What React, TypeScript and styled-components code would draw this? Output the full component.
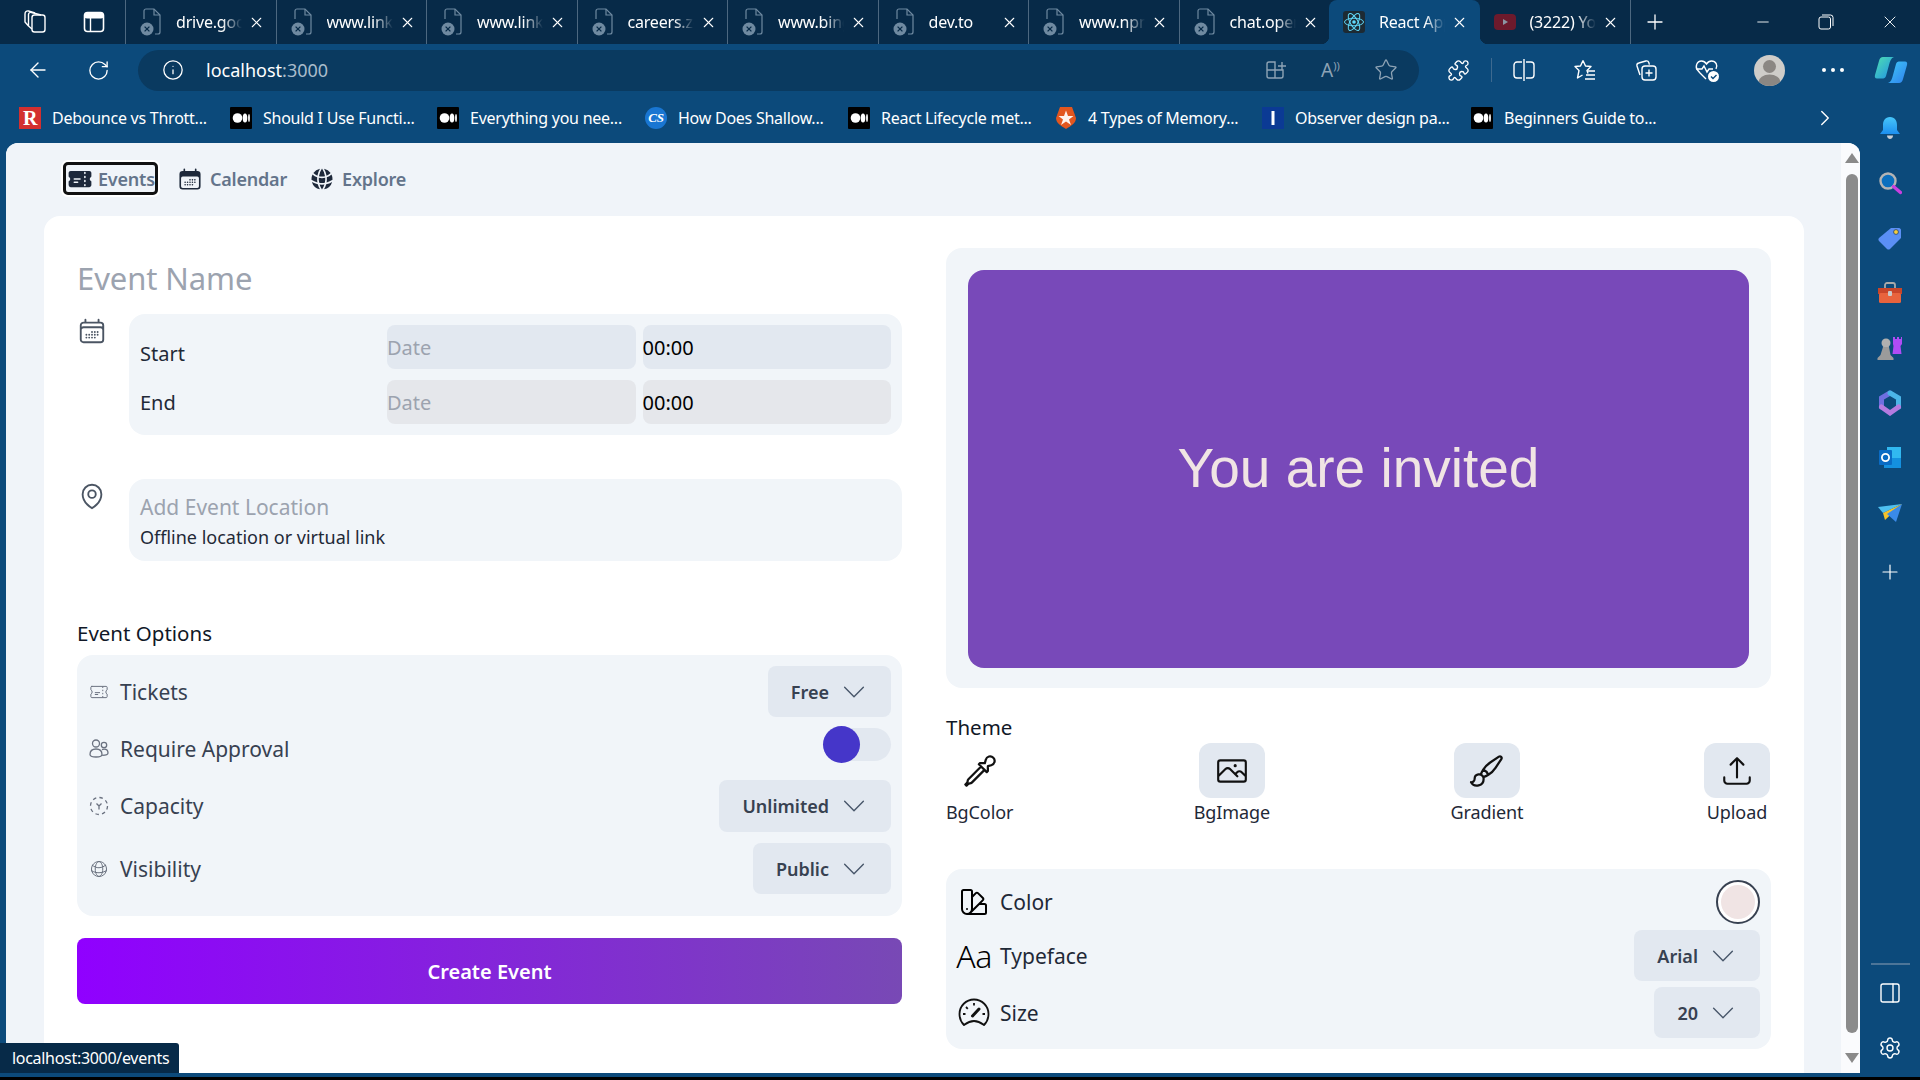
import React from "react";
import styled, { createGlobalStyle } from "styled-components";
import {
  HiTicket,
  HiCalendarDays,
  HiGlobeAlt,
  HiOutlineCalendarDays,
  HiOutlineMapPin,
  HiOutlineTicket,
  HiOutlineGlobeAlt,
  HiOutlineChevronDown,
  HiOutlineEyeDropper,
  HiOutlinePhoto,
  HiOutlinePaintBrush,
  HiOutlineArrowUpTray,
  HiOutlineSwatch,
} from "react-icons/hi2";
import {
  ArrowLeft,
  RotateCw,
  Info,
  Puzzle,
  Star,
  X,
  Plus,
  Minus,
  ChevronRight,
  Settings,
  PanelRight,
} from "lucide-react";

const FONT = `"Noto Sans", "Open Sans", sans-serif`;
const DARK = "#072a48";
const BLUE = "#0c4a7b";

const GlobalStyle = createGlobalStyle`
  html, body {
    margin: 0;
    height: 100%;
    overflow: hidden;
    font-family: ${FONT};
  }
  * {
    box-sizing: border-box;
  }
`;

const Window = styled.div`
  position: relative;
  display: flex;
  flex-direction: column;
  height: 1080px;
  background: ${BLUE};
  border-bottom: 3px solid #000;
  overflow: hidden;
`;

/* ---------- tab strip ---------- */
const TabStrip = styled.div`
  display: flex;
  flex: none;
  height: 44px;
  background: ${DARK};
  color: #fff;
`;

const StripButton = styled.div<{ $w: number }>`
  display: flex;
  flex: none;
  align-items: center;
  justify-content: center;
  width: ${(p) => p.$w}px;
`;

const Tab = styled.div<{ $active?: boolean; $plain?: boolean }>`
  position: relative;
  display: flex;
  flex: none;
  align-items: center;
  width: 150.5px;
  height: 44px;
  padding-left: 14px;
  border-left: ${(p) => (p.$active || p.$plain ? "none" : "1px solid #4d6880")};
  background-clip: padding-box;
  ${(p) =>
    p.$active &&
    `
    background: ${BLUE};
    border-radius: 8px 8px 0 0;
    &::before, &::after {
      content: "";
      position: absolute;
      bottom: 0;
      width: 8px;
      height: 8px;
    }
    &::before {
      left: -8px;
      background: radial-gradient(circle at 0 0, transparent 8px, ${BLUE} 8.5px);
    }
    &::after {
      right: -8px;
      background: radial-gradient(circle at 100% 0, transparent 8px, ${BLUE} 8.5px);
    }
  `}
`;

const TabTitle = styled.span`
  width: 66px;
  margin-left: 14px;
  font-size: 16px;
  letter-spacing: -0.2px;
  white-space: nowrap;
  overflow: hidden;
  -webkit-mask-image: linear-gradient(to right, #000 70%, transparent 100%);
  mask-image: linear-gradient(to right, #000 70%, transparent 100%);
`;

const TabClose = styled.span`
  display: flex;
  margin-left: 6px;
`;

const NewTab = styled.div`
  display: flex;
  flex: none;
  align-items: center;
  height: 44px;
  padding-left: 12px;
  border-left: 1px solid #4d6880;
`;

const WindowControls = styled.div`
  display: flex;
  flex: 1;
  justify-content: flex-end;
  align-items: center;
`;

/* ---------- toolbar ---------- */
const Toolbar = styled.div`
  display: flex;
  flex: none;
  align-items: center;
  height: 52px;
  padding-left: 8px;
  color: #fff;
`;

const ToolSlot = styled.div<{ $w?: number }>`
  display: flex;
  flex: none;
  align-items: center;
  justify-content: center;
  width: ${(p) => p.$w ?? 61}px;
`;

const AddressBar = styled.div`
  display: flex;
  flex: none;
  align-items: center;
  width: 1281px;
  height: 41px;
  margin: 0 9px 0 10px;
  padding-left: 24px;
  background: #0a3a60;
  border-radius: 21px;
`;

const Url = styled.div`
  flex: 1;
  margin-left: 22px;
  font-size: 18px;
  span {
    color: #a9bccb;
  }
`;

const AddressAction = styled.div`
  display: flex;
  flex: none;
  align-items: center;
  justify-content: center;
  width: 55px;
  color: #8ea3b5;
  font-size: 19px;
`;

const ReadAloudWaves = styled.span`
  margin-top: -10px;
  font-size: 11px;
`;

const ToolDivider = styled.div`
  flex: none;
  width: 1px;
  height: 24px;
  margin: 0 1px 0 2px;
  background: #3e6a90;
`;

const Avatar = styled.div`
  width: 31px;
  height: 31px;
  border-radius: 50%;
  overflow: hidden;
  background: #cfcdc9;
`;

const DotGroup = styled.div`
  display: flex;
  gap: 5px;
`;

const Dot = styled.span`
  width: 4px;
  height: 4px;
  background: #fff;
  border-radius: 50%;
`;

/* ---------- lower area ---------- */
const Lower = styled.div`
  display: flex;
  flex: 1;
  min-height: 0;
`;

const MainColumn = styled.div`
  display: flex;
  flex: 1;
  flex-direction: column;
  min-width: 0;
  padding-bottom: 4px;
`;

const Bookmarks = styled.div`
  display: flex;
  flex: none;
  align-items: center;
  height: 47px;
  padding: 0 0 4px 19px;
  color: #fff;
`;

const Bookmark = styled.div<{ $w: number }>`
  display: flex;
  flex: none;
  align-items: center;
  width: ${(p) => p.$w}px;
  gap: 11px;
  font-size: 16px;
  letter-spacing: -0.25px;
  white-space: nowrap;
`;

const BookmarkMore = styled.div`
  display: flex;
  margin-left: 132px;
`;

const Content = styled.div`
  display: flex;
  flex: 1;
  min-height: 0;
  margin-left: 6px;
  border-radius: 12px 12px 0 12px;
  overflow: hidden;
  background: #fff;
`;

const Page = styled.div`
  flex: 1;
  min-width: 0;
  overflow: hidden;
  background: #f0f4f9;
`;

const ScrollBar = styled.div`
  display: flex;
  flex: none;
  flex-direction: column;
  width: 19px;
  padding: 10px 2px 0 4px;
  background: #fafbfd;
  align-items: center;
`;

const ScrollArrow = styled.div<{ $down?: boolean }>`
  flex: none;
  width: 0;
  height: 0;
  border-left: 7px solid transparent;
  border-right: 7px solid transparent;
  ${(p) =>
    p.$down
      ? "border-top: 10px solid #8a8a8a;"
      : "border-bottom: 10px solid #8a8a8a;"}
`;

const ScrollThumb = styled.div`
  flex: none;
  width: 12px;
  height: 859px;
  margin: 11px 0 20px;
  border-radius: 6px;
  background: #8b8b8b;
`;

const Sidebar = styled.div`
  display: flex;
  flex: none;
  flex-direction: column;
  align-items: center;
  width: 60px;
  padding: 4px 0 2px;
  color: #fff;
`;

const SideSlot = styled.div<{ $mt?: number }>`
  display: flex;
  flex: none;
  align-items: center;
  justify-content: center;
  height: 55px;
  margin-top: ${(p) => p.$mt ?? 0}px;
`;

const SideSpacer = styled.div`
  flex: 1;
`;

const SideDivider = styled.div`
  flex: none;
  width: 39px;
  height: 2px;
  background: #4d7598;
`;

const StatusTip = styled.div`
  position: absolute;
  left: 0;
  bottom: 4px;
  width: 179px;
  height: 30px;
  padding-left: 12px;
  background: ${DARK};
  border-radius: 0 3px 0 0;
  color: #fff;
  font-size: 16px;
  letter-spacing: -0.3px;
  line-height: 30px;
`;

/* ---------- app nav ---------- */
const Nav = styled.nav`
  display: flex;
  align-items: center;
  padding: 19px 0 0 57px;
  height: 52px;
`;

const NavItem = styled.div<{ $active?: boolean }>`
  display: flex;
  align-items: center;
  height: 33px;
  padding: 0 0 0 3px;
  margin-right: ${(p) => (p.$active ? "16px" : "19px")};
  gap: ${(p) => (p.$active ? "5px" : "7px")};
  color: #64748b;
  font-size: 18px;
  font-weight: 600;
  letter-spacing: -0.2px;
  border-radius: 5px;
  ${(p) =>
    p.$active &&
    "border: 3px solid #111; box-shadow: 0 0 0 2px #fff; padding-left: 1px;"}
  svg {
    color: #1e293b;
    flex: none;
  }
`;

const Card = styled.div`
  display: flex;
  gap: 44px;
  height: 900px;
  margin: 21px 37px 0 38px;
  padding: 32px 33px 0;
  background: #fff;
  border-radius: 16px;
`;

const Column = styled.div`
  display: flex;
  flex: 1;
  flex-direction: column;
  min-width: 0;
`;

/* ---------- left form ---------- */
const EventName = styled.div`
  height: 40px;
  margin: 10px 0 16px;
  color: #9ca3af;
  font-size: 31px;
  line-height: 40px;
  letter-spacing: -0.1px;
`;

const FieldRow = styled.div<{ $mt?: number }>`
  display: flex;
  margin-top: ${(p) => p.$mt ?? 0}px;
`;

const FieldIcon = styled.div`
  flex: none;
  width: 52px;
  height: 30px;
  padding-top: 2px;
  color: #4b5563;
  display: flex;
  justify-content: flex-start;
`;

const FieldPanel = styled.div`
  display: flex;
  flex: 1;
  flex-direction: column;
  background: #f1f5f9;
  border-radius: 16px;
`;

const DatePanel = styled(FieldPanel)`
  gap: 11px;
  padding: 11px 11px 11px 11px;
`;

const DateRow = styled.div`
  display: flex;
  align-items: center;
  gap: 7px;
  height: 44px;
`;

const DateLabel = styled.div<{ $drop?: number }>`
  flex: 1;
  padding-top: ${(p) => p.$drop ?? 0}px;
  color: #1f2937;
  font-size: 20px;
`;

const DateField = styled.div<{ $bg: string; $muted?: boolean }>`
  flex: none;
  width: 248.5px;
  height: 44px;
  padding-top: 1px;
  background: ${(p) => p.$bg};
  border-radius: 8px;
  color: ${(p) => (p.$muted ? "#9ca3af" : "#000")};
  font-size: 20px;
  line-height: 44px;
`;

const LocationPanel = styled(FieldPanel)`
  height: 82px;
  padding: 13px 11px 0;
`;

const LocationTitle = styled.div`
  color: #9ca3af;
  font-size: 21px;
  line-height: 30px;
`;

const LocationHint = styled.div`
  margin-top: 1px;
  color: #1f2937;
  font-size: 18px;
  line-height: 28px;
`;

const SectionTitle = styled.div<{ $mt: number }>`
  margin-top: ${(p) => p.$mt}px;
  color: #111827;
  font-size: 20.5px;
  line-height: 28px;
`;

const OptionsPanel = styled.div`
  display: flex;
  flex-direction: column;
  gap: 11px;
  margin-top: 8px;
  padding: 11px 11px 22px 12px;
  background: #f1f5f9;
  border-radius: 16px;
`;

const OptionRow = styled.div<{ $h: number }>`
  display: flex;
  align-items: center;
  justify-content: space-between;
  height: ${(p) => p.$h}px;
`;

const OptionLabel = styled.div`
  display: flex;
  align-items: center;
  gap: 11px;
  color: #374151;
  font-size: 21px;
`;

const OptionIcon = styled.span`
  display: flex;
  flex: none;
  align-items: center;
  justify-content: center;
  width: 20px;
  height: 24px;
  color: #6b7280;
`;

const Dropdown = styled.div<{ $h: number }>`
  display: flex;
  align-items: center;
  gap: 10px;
  height: ${(p) => p.$h}px;
  padding: 0 22px 0 23px;
  background: #e2e8f0;
  border-radius: 8px;
  color: #374151;
  font-size: 18px;
  font-weight: 600;
  svg {
    color: #475569;
    flex: none;
  }
`;

const Toggle = styled.div`
  position: relative;
  align-self: flex-start;
  width: 68px;
  height: 33px;
  background: #e2e8f0;
  border-radius: 17px;
`;

const Knob = styled.div`
  position: absolute;
  left: 0;
  top: -2px;
  width: 37px;
  height: 37px;
  background: #4536c9;
  border-radius: 50%;
`;

const CreateButton = styled.div`
  display: flex;
  align-items: center;
  justify-content: center;
  height: 66px;
  margin-top: 22px;
  background: linear-gradient(to right, #9000ff, #7849b5);
  border-radius: 8px;
  color: #fff;
  font-size: 20px;
  font-weight: 600;
`;

/* ---------- right preview ---------- */
const PreviewPanel = styled.div`
  height: 440px;
  padding: 22px;
  background: #f1f5f9;
  border-radius: 16px;
`;

const Preview = styled.div`
  display: flex;
  align-items: center;
  justify-content: center;
  height: 398px;
  padding-bottom: 3px;
  background: #7849b9;
  border-radius: 16px;
  color: #f0e4e4;
  font-family: "Liberation Sans", Arial, sans-serif;
  font-size: 55px;
`;

const ThemeOptions = styled.div`
  display: flex;
  justify-content: space-between;
  margin-top: 2px;
  padding-right: 1px;
`;

const ThemeOption = styled.div`
  display: flex;
  flex-direction: column;
  align-items: center;
  color: #1f2937;
  font-size: 18px;
  letter-spacing: -0.1px;
  line-height: 24px;
`;

const ThemeTile = styled.div<{ $plain?: boolean }>`
  display: flex;
  align-items: center;
  justify-content: center;
  width: 66px;
  height: 55px;
  margin-bottom: 2px;
  border-radius: 12px;
  background: ${(p) => (p.$plain ? "transparent" : "#e2e8f0")};
  color: #111;
`;

const StylePanel = styled.div`
  display: flex;
  flex-direction: column;
  margin-top: 45px;
  height: 180px;
  padding: 11px 11px 11px 12px;
  background: #f1f5f9;
  border-radius: 16px;
`;

const StyleRow = styled.div<{ $h: number; $mt?: number }>`
  display: flex;
  align-items: center;
  justify-content: space-between;
  height: ${(p) => p.$h}px;
  margin-top: ${(p) => p.$mt ?? 0}px;
`;

const StyleLabel = styled.div`
  display: flex;
  align-items: center;
  gap: 10px;
  color: #1f2937;
  font-size: 21px;
`;

const StyleIcon = styled.div`
  display: flex;
  flex: none;
  align-items: center;
  justify-content: center;
  width: 32px;
  height: 34px;
  color: #000;
`;

const AaGlyph = styled.span`
  font-size: 32px;
  font-weight: 300;
  letter-spacing: -0.5px;
  line-height: 1;
`;

const Swatch = styled.div`
  width: 44px;
  height: 44px;
  background: #f0e4e4;
  border: 2px solid #374151;
  border-radius: 50%;
  box-shadow: inset 0 0 0 3px #fff;
`;

/* ---------- drawn icons ---------- */
const Workspaces = () => (
  <svg width="24" height="26" viewBox="0 0 24 26" fill="none" stroke="#fff" strokeWidth="1.4">
    <rect x="9" y="6" width="13" height="17" rx="2.5" />
    <path d="M9 20 5.5 17V5.5C5.5 4 7 3 8.5 3.5L18 6M5.5 17 2 13V5C2 3 3.5 1.5 5.5 2L12 4" />
  </svg>
);

const VerticalTabs = () => (
  <svg width="22" height="22" viewBox="0 0 22 22" fill="none">
    <rect x="1.5" y="1.5" width="19" height="19" rx="3" stroke="#fff" strokeWidth="1.6" />
    <rect x="1.5" y="1.5" width="19" height="6" rx="2.5" fill="#fff" />
    <path d="M7.5 7v13" stroke="#fff" strokeWidth="1.4" />
  </svg>
);

const SleepingDoc = () => (
  <svg width="22" height="30" viewBox="0 0 22 30" fill="none" style={{ flex: "none" }}>
    <path d="M4 12V4a2 2 0 0 1 2-2h8l6 6v17a2 2 0 0 1-2 2h-3" stroke="#6f8aa1" strokeWidth="1.2" />
    <path d="M14 2v6h6" stroke="#6f8aa1" strokeWidth="1.2" />
    <circle cx="7" cy="22" r="6.5" fill="#6f8aa1" />
    <path d="m4.6 19.6 4.8 4.8m0-4.8-4.8 4.8" stroke={DARK} strokeWidth="1.3" />
  </svg>
);

const ReactFav = () => (
  <svg width="22" height="22" viewBox="0 0 22 22" fill="none" style={{ flex: "none" }}>
    <rect width="22" height="22" rx="3" fill="#1d2a33" />
    <g stroke="#61dafb" strokeWidth="1">
      <ellipse cx="11" cy="11" rx="9.5" ry="3.8" />
      <ellipse cx="11" cy="11" rx="9.5" ry="3.8" transform="rotate(60 11 11)" />
      <ellipse cx="11" cy="11" rx="9.5" ry="3.8" transform="rotate(120 11 11)" />
    </g>
    <circle cx="11" cy="11" r="1.8" fill="#61dafb" />
  </svg>
);

const YouTubeFav = () => (
  <svg width="22" height="16" viewBox="0 0 22 16" style={{ flex: "none" }}>
    <rect width="22" height="16" rx="4" fill="#6d1a2c" />
    <path d="M9 5v6l5-3z" fill="#8c96a3" />
  </svg>
);

const RestoreIcon = () => (
  <svg width="16" height="16" viewBox="0 0 16 16" fill="none" stroke="#fff" strokeWidth="1">
    <rect x="1" y="3" width="11.5" height="12" rx="2" />
    <path d="M4 1h8.5A2.5 2.5 0 0 1 15 3.5V12" />
  </svg>
);

const AddTabIcon = () => (
  <svg width="24" height="24" viewBox="0 0 24 24" fill="none" stroke="#8ea3b5" strokeWidth="1.4">
    <path d="M3 12h8v8H5a2 2 0 0 1-2-2zM11 12h8v6a2 2 0 0 1-2 2h-6zM3 12V6a2 2 0 0 1 2-2h6v8" />
    <path d="M14 8h8M18 4v8" />
  </svg>
);

const SplitIcon = () => (
  <svg width="22" height="24" viewBox="0 0 22 24" fill="none" stroke="#fff" strokeWidth="1.4">
    <path d="M9 4H4a3 3 0 0 0-3 3v10a3 3 0 0 0 3 3h5M13 4h5a3 3 0 0 1 3 3v10a3 3 0 0 1-3 3h-5M11 1v22" />
  </svg>
);

const CollectionsIcon = () => (
  <svg width="24" height="24" viewBox="0 0 24 24" fill="none" stroke="#fff" strokeWidth="1.4">
    <path d="M6 17 3 8a2.5 2.5 0 0 1 1.8-3l7-2a2.5 2.5 0 0 1 3 1.6l.6 2" />
    <rect x="8" y="8" width="14" height="14" rx="3" />
    <path d="M15 11.5v7M11.5 15h7" />
  </svg>
);

const HealthIcon = () => (
  <svg width="26" height="26" viewBox="0 0 26 26" fill="none">
    <path
      d="M6 16 3.5 13C1 10 2.5 4 7.5 4c2.5 0 4 1.500 5 3 1-1.500 2.500-3 5-3 4.500 0 6.500 4.500 4.500 8M2 12h6l2-3 3 6 2-3h4M6 16l6 6"
      stroke="#fff"
      strokeWidth="1.4"
    />
    <circle cx="19.5" cy="19.5" r="5.5" fill="#fff" />
    <path d="m17 19.5 2 2 3.500-3.500" stroke={BLUE} strokeWidth="1.4" />
  </svg>
);

const FavoritesIcon = () => (
  <svg width="24" height="24" viewBox="0 0 24 24" fill="none" stroke="#fff" strokeWidth="1.4">
    <path d="M10 2.500 12.500 8l5.500.5-4 4 1 3M10 2.500 7.500 8 2 8.500l4 4L4.500 20l5-3" strokeLinejoin="round" />
    <path d="M15 13h7M13 17h9M12 21h10" />
  </svg>
);

const AvatarGlyph = () => (
  <svg width="31" height="31" viewBox="0 0 31 31">
    <circle cx="15.5" cy="11.5" r="6.5" fill="#8b8783" />
    <ellipse cx="15.5" cy="27" rx="11" ry="7.5" fill="#8b8783" />
  </svg>
);

const CopilotIcon = () => (
  <svg width="36" height="30" viewBox="0 0 34 30">
    <defs>
      <linearGradient id="cpA" x1="0" y1="0" x2="1" y2="1">
        <stop offset="0" stopColor="#4fe0b0" />
        <stop offset="1" stopColor="#1f8fe8" />
      </linearGradient>
      <linearGradient id="cpB" x1="0" y1="0" x2="1" y2="1">
        <stop offset="0" stopColor="#3fcaf7" />
        <stop offset="1" stopColor="#2f80ed" />
      </linearGradient>
    </defs>
    <path d="M9 2h11c-3 1-4 4-5 8l-3 11c-.6 2-2 2.5-4 2.5H3C1 23.500.5 22 1 20L5 6c.6-2.500 2-4 4-4z" fill="url(#cpA)" />
    <path d="M25 28H14c3-1 4-4 5-8l3-11c.6-2 2-2.500 4-2.500h5c2 0 2.500 1.500 2 3.500l-4 14c-.6 2.500-2 4-4 4z" fill="url(#cpB)" />
  </svg>
);

const MediumFav = () => (
  <svg width="22" height="22" viewBox="0 0 22 22" style={{ flex: "none" }}>
    <rect width="22" height="22" fill="#000" rx="1" />
    <circle cx="7.5" cy="11" r="4.8" fill="#fff" />
    <ellipse cx="15" cy="11" rx="2.3" ry="4.5" fill="#fff" />
    <ellipse cx="19" cy="11" rx="0.9" ry="4" fill="#fff" />
  </svg>
);

const RedFavBox = styled.span`
  display: flex;
  flex: none;
  align-items: center;
  justify-content: center;
  width: 22px;
  height: 22px;
  background: #d32f2f;
  color: #fff;
  font-family: "Liberation Serif", serif;
  font-size: 20px;
  font-weight: 700;
  line-height: 1;
`;

const CsFavBox = styled.span`
  display: flex;
  flex: none;
  align-items: center;
  justify-content: center;
  width: 22px;
  height: 22px;
  background: #1976d2;
  border-radius: 50%;
  color: #fff;
  font-family: "Liberation Serif", serif;
  font-size: 13px;
  font-weight: 700;
  font-style: italic;
`;

const AuthFav = () => (
  <svg width="22" height="22" viewBox="0 0 22 22" style={{ flex: "none" }}>
    <path d="M5 0h12l4 11c0 5-5 8-10 11C6 19 1 16 1 11z" fill="#e2561f" />
    <path d="m11 3.500 2 5.500h5.500l-4.500 3.500 2 5.500-5-3.500-5 3.500 2-5.500L3.500 9H9z" fill="#fff" fillOpacity="0.92" />
  </svg>
);

const BarFav = () => (
  <svg width="22" height="22" viewBox="0 0 22 22" style={{ flex: "none" }}>
    <rect width="22" height="22" fill="#0b3a94" />
    <rect x="9.5" y="4" width="3" height="14" fill="#fff" />
  </svg>
);

const Bell = () => (
  <svg width="22" height="24" viewBox="0 0 22 24">
    <defs>
      <linearGradient id="bellG" x1="0" y1="0" x2="0" y2="1">
        <stop offset="0" stopColor="#47c6fa" />
        <stop offset="1" stopColor="#1d8ff0" />
      </linearGradient>
    </defs>
    <path d="M11 1c5 0 7 4 7 8v5l3 4H1l3-4V9c0-4 2-8 7-8z" fill="url(#bellG)" />
    <path d="M8 19.500h6c0 2-1.500 3.500-3 3.500s-3-1.500-3-3.500z" fill="#c7cdd4" />
  </svg>
);

const SearchFav = () => (
  <svg width="24" height="24" viewBox="0 0 24 24" fill="none">
    <circle cx="10" cy="10" r="7.5" fill="#0b6fbe" stroke="#b4b4b4" strokeWidth="2.4" />
    <path d="m15.500 15.500 7 6" stroke="#c93fe0" strokeWidth="3.4" strokeLinecap="round" />
  </svg>
);

const TagIcon = () => (
  <svg width="24" height="24" viewBox="0 0 24 24">
    <path d="M13 2h8c1 0 2 1 2 2v8L12 23c-1 .8-2 .8-3 0L1 15c-.8-1-.8-2 0-3z" fill="#5b8ff5" />
    <circle cx="18" cy="6" r="2.4" fill="#f7cf3c" stroke="#24406e" strokeWidth="0.8" />
  </svg>
);

const ToolboxIcon = () => (
  <svg width="26" height="22" viewBox="0 0 26 22">
    <path d="M8 6V3c0-1 1-2 2-2h6c1 0 2 1 2 2v3" fill="none" stroke="#a9a9a9" strokeWidth="1.8" />
    <rect x="1" y="6" width="24" height="6" fill="#c8452a" />
    <rect x="2" y="11" width="22" height="10" rx="1.5" fill="#e8633d" />
    <rect x="11" y="9" width="4" height="5" rx="1" fill="#c9c9c9" />
  </svg>
);

const ChessIcon = () => (
  <svg width="26" height="26" viewBox="0 0 26 26">
    <path d="M16 2h2v2h2V2h2v2h2V2h1v7l-1.500 2 1 8h-9l1-8L16 9z" fill="#b04cf5" />
    <circle cx="9" cy="8" r="4.5" fill="#b0b0b0" />
    <path d="M6 12h6l1.500 8 3 3v2H.5v-2l3-3z" fill="#9b9b9b" />
  </svg>
);

const M365Icon = () => (
  <svg width="24" height="26" viewBox="0 0 24 26" fill="none" strokeWidth="5" strokeLinecap="round">
    <path d="M12 3 3.500 8v9" stroke="#6f6fe0" />
    <path d="M12 3l8.500 5v9" stroke="#4bb5e8" />
    <path d="M3.500 17 12 23l8.500-6" stroke="#b57be0" />
  </svg>
);

const OutlookIcon = () => (
  <svg width="24" height="24" viewBox="0 0 24 24">
    <rect x="9" y="1" width="14" height="14" fill="#31b8f0" />
    <path d="M6 12 23 12v10H6z" fill="#1490df" />
    <rect x="1" y="4" width="13" height="15" rx="1" fill="#0a6bc4" />
    <circle cx="7.5" cy="11.5" r="3.6" fill="none" stroke="#fff" strokeWidth="1.8" />
  </svg>
);

const SendIcon = () => (
  <svg width="26" height="20" viewBox="0 0 26 20">
    <path d="M1 4 25 1 6 10z" fill="#4fc0f0" />
    <path d="M25 1 6 10l2 7z" fill="#f6c329" />
    <path d="M25 1 10 11l9 8z" fill="#3a8ae8" />
  </svg>
);

const PeopleIcon = () => (
  <svg width="20" height="24" viewBox="0 0 20 24" fill="none" stroke="#6b7280" strokeWidth="1.3">
    <circle cx="7" cy="6.500" r="3.500" />
    <circle cx="15" cy="8" r="2.700" />
    <path d="M1 17.500c0-3.500 2.500-5.500 6-5.500s6 2 6 5.500c0 1.500-2.500 2.500-6 2.500s-6-1-6-2.500z" />
    <path d="M13 12.700c.6-.3 1.300-.5 2-.5 2.500 0 4 1.500 4 3.800 0 1.500-2 2.300-5.800 2.300" />
  </svg>
);

const CapacityIcon = () => (
  <svg width="20" height="20" viewBox="0 0 20 20" fill="none" stroke="#6b7280" strokeWidth="1.3">
    <circle cx="10" cy="10" r="8.5" strokeDasharray="3.500 3.200" />
    <path d="M7.500 7.500 10 10l2.500-2.500M10 10v3.500" />
  </svg>
);

const GaugeIcon = () => (
  <svg width="32" height="32" viewBox="0 0 32 32" fill="none" stroke="#111" strokeWidth="1.8">
    <path d="M6 28C2 24 1.500 20 1.500 17a14.500 14.500 0 0 1 29 0c0 3-.5 7-4.500 11-2-1.500-5-4-10-4s-8 2.500-10 4z" strokeLinejoin="round" />
    <path d="m14.500 19 6.500-7" strokeWidth="3" strokeLinecap="round" />
    <path d="M16 6v2.500M8 10l1.800 1.800M5 17h2.500M27 17h-2.500" />
  </svg>
);

const TABS = ["drive.google", "www.linkedin", "www.linkedin", "careers.zoho", "www.bing.com", "dev.to", "www.npmjs", "chat.openai"];

const BOOKMARKS: { icon: React.ReactNode; text: string; width: number }[] = [
  { icon: <RedFavBox>R</RedFavBox>, text: "Debounce vs Thrott...", width: 211 },
  { icon: <MediumFav />, text: "Should I Use Functi...", width: 207 },
  { icon: <MediumFav />, text: "Everything you nee...", width: 208 },
  { icon: <CsFavBox>CS</CsFavBox>, text: "How Does Shallow...", width: 203 },
  { icon: <MediumFav />, text: "React Lifecycle met...", width: 207 },
  { icon: <AuthFav />, text: "4 Types of Memory...", width: 207 },
  { icon: <BarFav />, text: "Observer design pa...", width: 209 },
  { icon: <MediumFav />, text: "Beginners Guide to...", width: 209 },
];

const SIDE_ICONS = [<Bell />, <SearchFav />, <TagIcon />, <ToolboxIcon />, <ChessIcon />, <M365Icon />, <OutlookIcon />, <SendIcon />];

const Chevron = () => <HiOutlineChevronDown size={30} strokeWidth={1.1} />;

const App: React.FC = () => {
  return (
    <Window>
      <GlobalStyle />
      <TabStrip>
        <StripButton $w={70}>
          <Workspaces />
        </StripButton>
        <StripButton $w={48}>
          <VerticalTabs />
        </StripButton>
        <StripButton $w={7} />
        {TABS.map((title, index) => (
          <Tab key={index}>
            <SleepingDoc />
            <TabTitle>{title}</TabTitle>
            <TabClose>
              <X size={17} strokeWidth={1.5} />
            </TabClose>
          </Tab>
        ))}
        <Tab $active>
          <ReactFav />
          <TabTitle>React App</TabTitle>
          <TabClose>
            <X size={17} strokeWidth={1.5} />
          </TabClose>
        </Tab>
        <Tab $plain>
          <YouTubeFav />
          <TabTitle>(3222) YouTube</TabTitle>
          <TabClose>
            <X size={17} strokeWidth={1.5} />
          </TabClose>
        </Tab>
        <NewTab>
          <Plus size={24} strokeWidth={1.3} />
        </NewTab>
        <WindowControls>
          <StripButton $w={58}>
            <Minus size={18} strokeWidth={1.2} />
          </StripButton>
          <StripButton $w={68}>
            <RestoreIcon />
          </StripButton>
          <StripButton $w={60}>
            <X size={20} strokeWidth={1.1} />
          </StripButton>
        </WindowControls>
      </TabStrip>

      <Toolbar>
        <ToolSlot $w={60}>
          <ArrowLeft size={24} strokeWidth={1.4} />
        </ToolSlot>
        <ToolSlot $w={60}>
          <RotateCw size={23} strokeWidth={1.4} />
        </ToolSlot>
        <AddressBar>
          <Info size={22} strokeWidth={1.4} />
          <Url>
            localhost<span>:3000</span>
          </Url>
          <AddressAction>
            <AddTabIcon />
          </AddressAction>
          <AddressAction>
            A<ReadAloudWaves>))</ReadAloudWaves>
          </AddressAction>
          <AddressAction>
            <Star size={24} strokeWidth={1.3} />
          </AddressAction>
          <ToolSlot $w={6} />
        </AddressBar>
        <ToolSlot>
          <Puzzle size={23} strokeWidth={1.4} />
        </ToolSlot>
        <ToolDivider />
        <ToolSlot>
          <SplitIcon />
        </ToolSlot>
        <ToolSlot>
          <FavoritesIcon />
        </ToolSlot>
        <ToolSlot>
          <CollectionsIcon />
        </ToolSlot>
        <ToolSlot>
          <HealthIcon />
        </ToolSlot>
        <ToolSlot $w={65}>
          <Avatar>
            <AvatarGlyph />
          </Avatar>
        </ToolSlot>
        <ToolSlot>
          <DotGroup>
            <Dot />
            <Dot />
            <Dot />
          </DotGroup>
        </ToolSlot>
        <ToolSlot $w={55}>
          <CopilotIcon />
        </ToolSlot>
      </Toolbar>

      <Lower>
        <MainColumn>
          <Bookmarks>
            {BOOKMARKS.map((bookmark) => (
              <Bookmark key={bookmark.text} $w={bookmark.width}>
                {bookmark.icon}
                {bookmark.text}
              </Bookmark>
            ))}
            <BookmarkMore>
              <ChevronRight size={26} strokeWidth={1.3} />
            </BookmarkMore>
          </Bookmarks>

          <Content>
            <Page>
              <Nav>
                <NavItem $active>
                  <HiTicket size={26} />
                  Events
                </NavItem>
                <NavItem>
                  <HiCalendarDays size={26} />
                  Calendar
                </NavItem>
                <NavItem>
                  <HiGlobeAlt size={26} />
                  Explore
                </NavItem>
              </Nav>

              <Card>
                <Column>
                  <EventName>Event Name</EventName>
                  <FieldRow>
                    <FieldIcon>
                      <HiOutlineCalendarDays size={30} />
                    </FieldIcon>
                    <DatePanel>
                      <DateRow>
                        <DateLabel $drop={12}>Start</DateLabel>
                        <DateField $bg="#e2e8f0" $muted>
                          Date
                        </DateField>
                        <DateField $bg="#e2e8f0">00:00</DateField>
                      </DateRow>
                      <DateRow>
                        <DateLabel>End</DateLabel>
                        <DateField $bg="#e5e7eb" $muted>
                          Date
                        </DateField>
                        <DateField $bg="#e5e7eb">00:00</DateField>
                      </DateRow>
                    </DatePanel>
                  </FieldRow>

                  <FieldRow $mt={44}>
                    <FieldIcon>
                      <HiOutlineMapPin size={30} />
                    </FieldIcon>
                    <LocationPanel>
                      <LocationTitle>Add Event Location</LocationTitle>
                      <LocationHint>Offline location or virtual link</LocationHint>
                    </LocationPanel>
                  </FieldRow>

                  <SectionTitle $mt={58}>Event Options</SectionTitle>
                  <OptionsPanel>
                    <OptionRow $h={51}>
                      <OptionLabel>
                        <OptionIcon>
                          <HiOutlineTicket size={24} strokeWidth={1.2} />
                        </OptionIcon>
                        Tickets
                      </OptionLabel>
                      <Dropdown $h={51}>
                        Free
                        <Chevron />
                      </Dropdown>
                    </OptionRow>
                    <OptionRow $h={41}>
                      <OptionLabel>
                        <OptionIcon>
                          <PeopleIcon />
                        </OptionIcon>
                        Require Approval
                      </OptionLabel>
                      <Toggle>
                        <Knob />
                      </Toggle>
                    </OptionRow>
                    <OptionRow $h={52}>
                      <OptionLabel>
                        <OptionIcon>
                          <CapacityIcon />
                        </OptionIcon>
                        Capacity
                      </OptionLabel>
                      <Dropdown $h={52}>
                        Unlimited
                        <Chevron />
                      </Dropdown>
                    </OptionRow>
                    <OptionRow $h={51}>
                      <OptionLabel>
                        <OptionIcon>
                          <HiOutlineGlobeAlt size={24} strokeWidth={1.2} />
                        </OptionIcon>
                        Visibility
                      </OptionLabel>
                      <Dropdown $h={51}>
                        Public
                        <Chevron />
                      </Dropdown>
                    </OptionRow>
                  </OptionsPanel>
                  <CreateButton>Create Event</CreateButton>
                </Column>

                <Column>
                  <PreviewPanel>
                    <Preview>You are invited</Preview>
                  </PreviewPanel>
                  <SectionTitle $mt={25}>Theme</SectionTitle>
                  <ThemeOptions>
                    <ThemeOption>
                      <ThemeTile $plain>
                        <HiOutlineEyeDropper size={36} />
                      </ThemeTile>
                      BgColor
                    </ThemeOption>
                    <ThemeOption>
                      <ThemeTile>
                        <HiOutlinePhoto size={34} />
                      </ThemeTile>
                      BgImage
                    </ThemeOption>
                    <ThemeOption>
                      <ThemeTile>
                        <HiOutlinePaintBrush size={36} />
                      </ThemeTile>
                      Gradient
                    </ThemeOption>
                    <ThemeOption>
                      <ThemeTile>
                        <HiOutlineArrowUpTray size={34} />
                      </ThemeTile>
                      Upload
                    </ThemeOption>
                  </ThemeOptions>

                  <StylePanel>
                    <StyleRow $h={44}>
                      <StyleLabel>
                        <StyleIcon>
                          <HiOutlineSwatch size={34} />
                        </StyleIcon>
                        Color
                      </StyleLabel>
                      <Swatch />
                    </StyleRow>
                    <StyleRow $h={51} $mt={6}>
                      <StyleLabel>
                        <StyleIcon>
                          <AaGlyph>Aa</AaGlyph>
                        </StyleIcon>
                        Typeface
                      </StyleLabel>
                      <Dropdown $h={51}>
                        Arial
                        <Chevron />
                      </Dropdown>
                    </StyleRow>
                    <StyleRow $h={51} $mt={6}>
                      <StyleLabel>
                        <StyleIcon>
                          <GaugeIcon />
                        </StyleIcon>
                        Size
                      </StyleLabel>
                      <Dropdown $h={51}>
                        20
                        <Chevron />
                      </Dropdown>
                    </StyleRow>
                  </StylePanel>
                </Column>
              </Card>
            </Page>
            <ScrollBar>
              <ScrollArrow />
              <ScrollThumb />
              <ScrollArrow $down />
            </ScrollBar>
          </Content>
        </MainColumn>

        <Sidebar>
          {SIDE_ICONS.map((icon, index) => (
            <SideSlot key={index}>{icon}</SideSlot>
          ))}
          <SideSlot $mt={4}>
            <Plus size={24} strokeWidth={1.2} />
          </SideSlot>
          <SideSpacer />
          <SideDivider />
          <SideSlot>
            <PanelRight size={24} strokeWidth={1.4} />
          </SideSlot>
          <SideSlot>
            <Settings size={24} strokeWidth={1.4} />
          </SideSlot>
        </Sidebar>
      </Lower>
      <StatusTip>localhost:3000/events</StatusTip>
    </Window>
  );
};

export default App;
